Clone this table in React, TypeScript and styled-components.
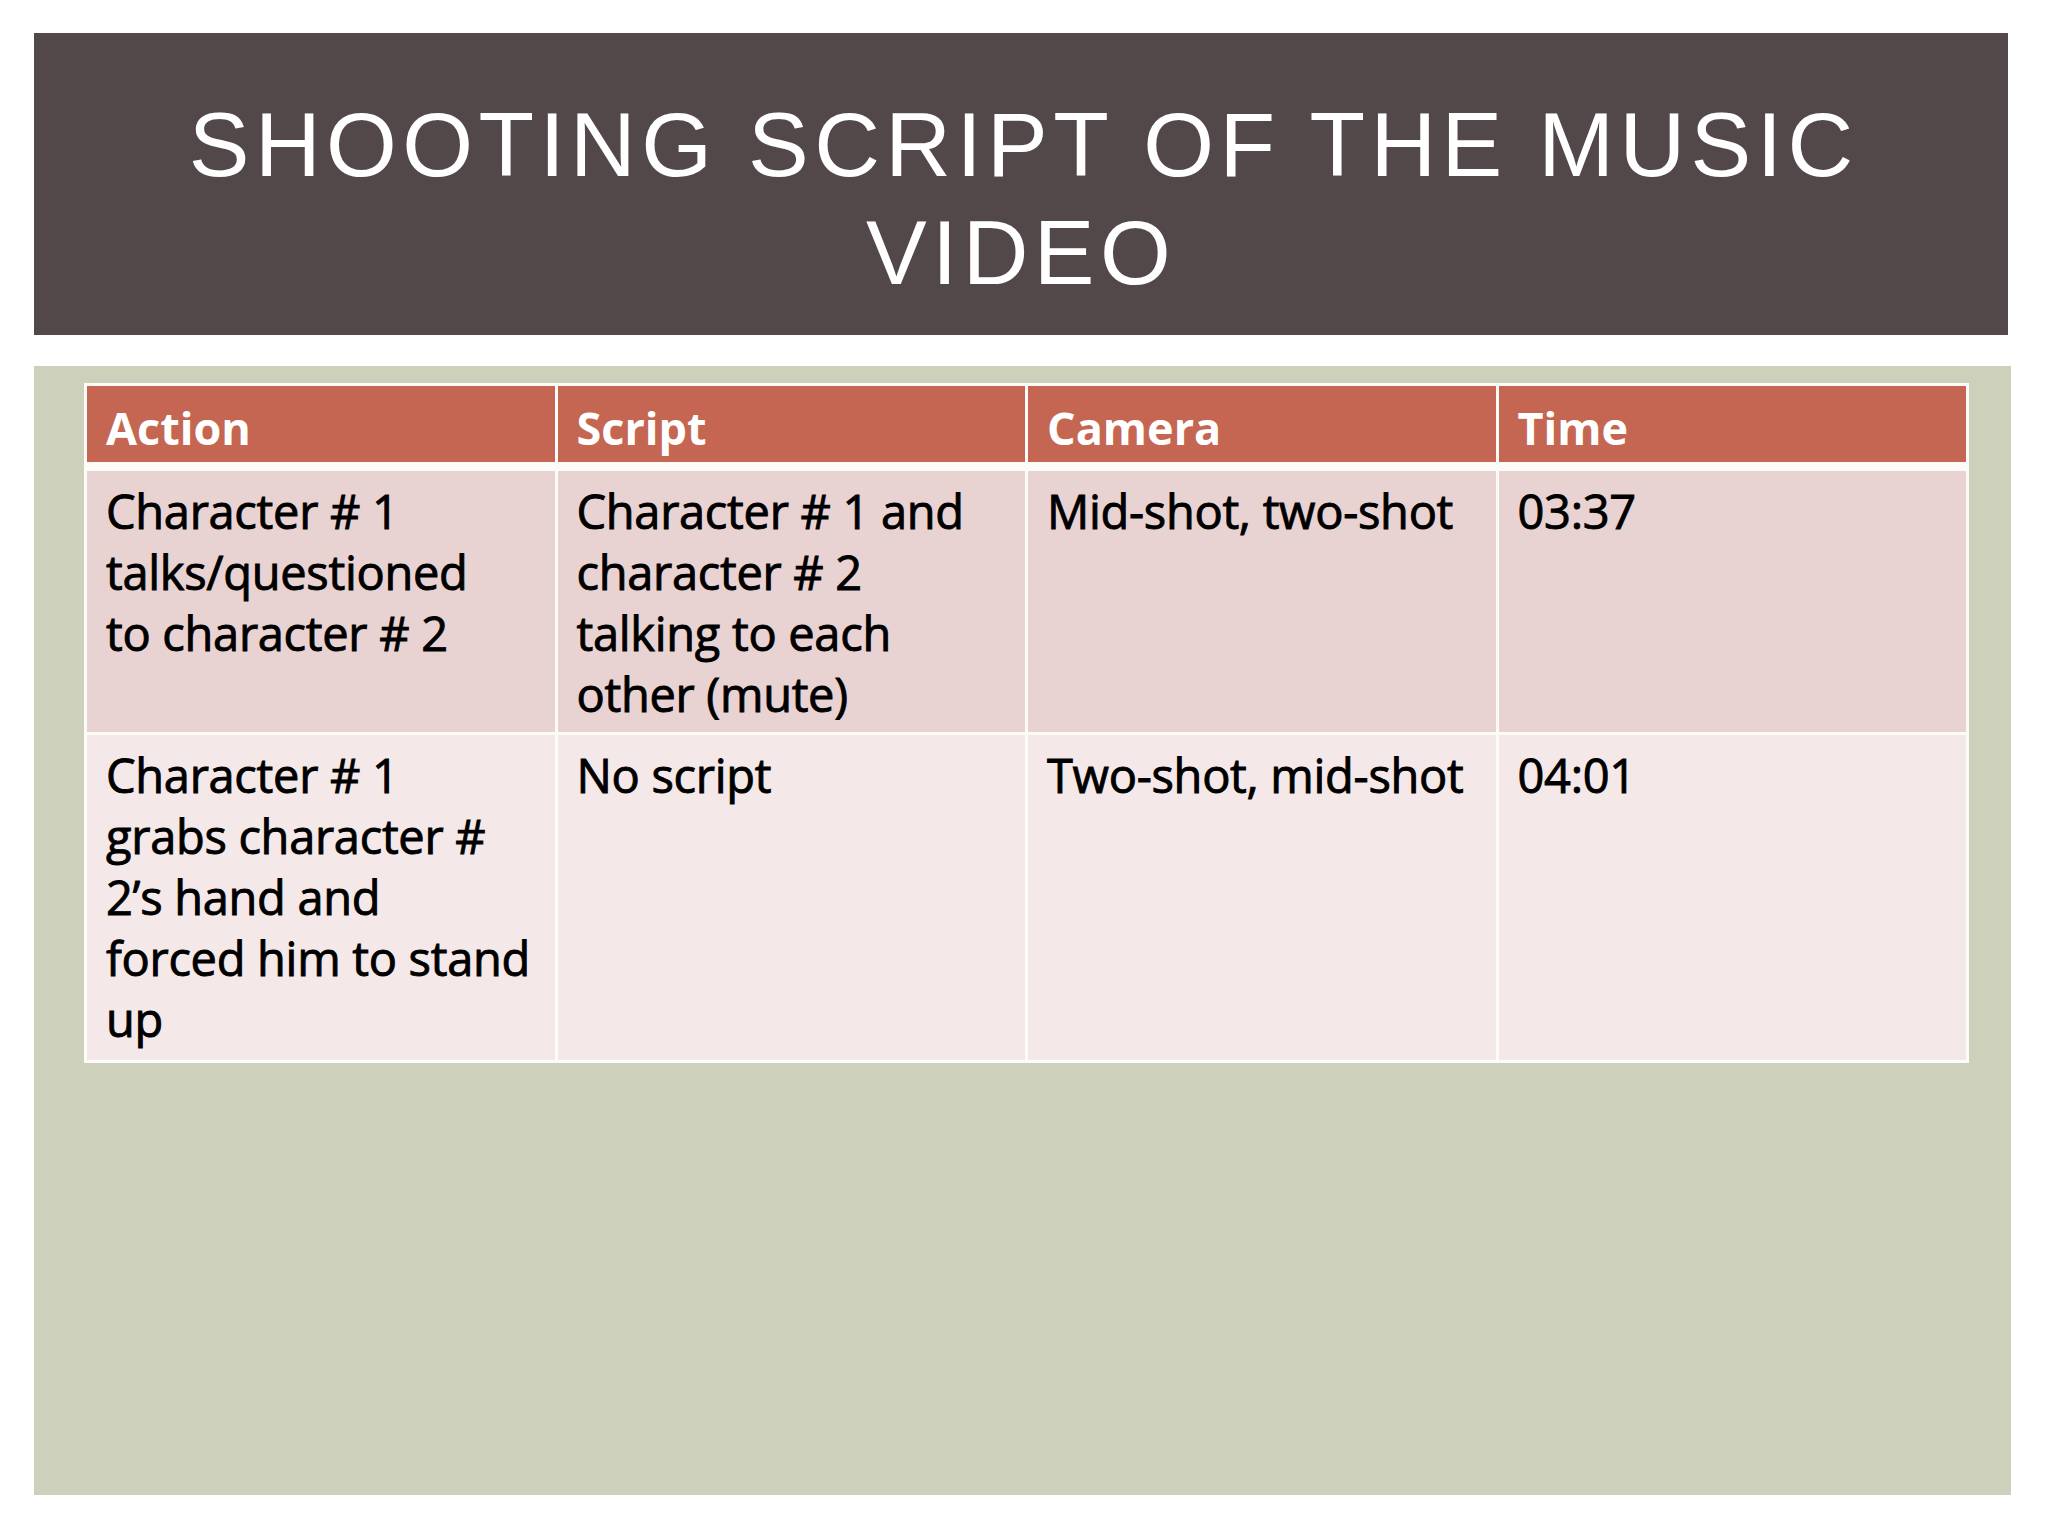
import React from "react";
import styled, { createGlobalStyle } from "styled-components";

const GlobalStyle = createGlobalStyle`
  html, body {
    margin: 0;
    padding: 0;
    background: #ffffff;
  }
`;

const Slide = styled.div`
  width: 2048px;
  height: 1536px;
  padding: 33px 0 0 34px;
  box-sizing: border-box;
  display: flex;
  flex-direction: column;
  gap: 31px;
`;

const TitleBar = styled.header`
  width: 1974px;
  height: 302px;
  box-sizing: border-box;
  padding-top: 58px;
  background: #534849;
`;

const Title = styled.h1`
  margin: 0;
  font-family: "Liberation Sans", Arial, sans-serif;
  font-weight: 400;
  font-size: 91px;
  line-height: 108px;
  letter-spacing: 5.4px;
  text-indent: 5.4px;
  color: #ffffff;
  text-align: center;
  text-transform: uppercase;
`;

const Body = styled.section`
  width: 1977px;
  height: 1129px;
  box-sizing: border-box;
  padding: 17px 0 0 50px;
  background: #cdd0ba;
`;

const Table = styled.div`
  width: 1885px;
  box-sizing: border-box;
  display: grid;
  grid-template-columns: repeat(4, 1fr);
  column-gap: 3px;
  row-gap: 3px;
  padding: 3px;
  background: #fdfbf8;
  font-family: "Open Sans", "Liberation Sans", sans-serif;
`;

const HeadCell = styled.div`
  background: #c56652;
  color: #ffffff;
  font-weight: 700;
  font-size: 45px;
  line-height: 61px;
  padding: 11px 10px 4px 19px;
  margin-bottom: 6px;
`;

// the slide font is heavier than Open Sans regular, so thicken the strokes a little
const Cell = styled.div<{ $tone: "dark" | "light" }>`
  background: ${(p) => (p.$tone === "dark" ? "#e9d2d2" : "#f4e9e8")};
  color: #000000;
  font-weight: 400;
  font-size: 47px;
  line-height: 61px;
  letter-spacing: -0.3px;
  -webkit-text-stroke: 0.9px #000000;
  padding: ${(p) => (p.$tone === "dark" ? "10px 10px 7px 19px" : "10px 10px 10px 19px")};
  white-space: nowrap;
`;

const headers = ["Action", "Script", "Camera", "Time"];

const rows: string[][][] = [
  [
    ["Character # 1", "talks/questioned", "to character # 2"],
    ["Character # 1 and", "character # 2", "talking to each", "other (mute)"],
    ["Mid-shot, two-shot"],
    ["03:37"],
  ],
  [
    ["Character # 1", "grabs character #", "2\u2019s hand and", "forced him to stand", "up"],
    ["No script"],
    ["Two-shot, mid-shot"],
    ["04:01"],
  ],
];

export default function App() {
  return (
    <>
      <GlobalStyle />
      <Slide>
        <TitleBar>
          <Title>
            Shooting script of the music
            <br />
            video
          </Title>
        </TitleBar>
        <Body>
          <Table>
            {headers.map((h) => (
              <HeadCell key={h}>{h}</HeadCell>
            ))}
            {rows.map((row, i) =>
              row.map((lines, j) => (
                <Cell key={`${i}-${j}`} $tone={i % 2 === 0 ? "dark" : "light"}>
                  {lines.map((line, k) => (
                    <React.Fragment key={k}>
                      {k > 0 && <br />}
                      {line}
                    </React.Fragment>
                  ))}
                </Cell>
              ))
            )}
          </Table>
        </Body>
      </Slide>
    </>
  );
}
